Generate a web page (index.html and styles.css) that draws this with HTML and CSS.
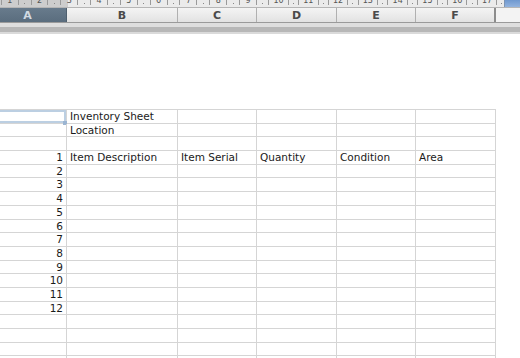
FILE: index.html
```html
<!DOCTYPE html>
<html>
<head>
    <title>Inventory Sheet</title>
    <link rel="stylesheet" href="styles.css">
</head>
<body>
    <div class="ruler">
        <div class="ruler-track" id="ruler"></div>
        <div class="ruler-corner"></div>
    </div>

    <div class="col-heads">
        <div class="col-head selected">A</div>
        <div class="col-head">B</div>
        <div class="col-head">C</div>
        <div class="col-head">D</div>
        <div class="col-head">E</div>
        <div class="col-head last">F</div>
        <div class="col-rest"></div>
    </div>

    <div class="split">
        <div class="split-light"></div>
        <div class="split-dark"></div>
        <div class="split-fade"></div>
    </div>

    <div class="blank-area"></div>

    <div class="sheet" id="sheet"></div>

    <script>
        document.addEventListener("DOMContentLoaded", function () {
            const ruler = document.getElementById("ruler");
            for (let n = 1; n <= 17; n++) {
                const seg = document.createElement("div");
                seg.className = "ruler-seg";
                seg.innerHTML = '<i class="tick"></i><span>' + n + '</span><i class="tick"></i><i class="dot"></i>';
                ruler.appendChild(seg);
            }

            const rows = [
                ["", "Inventory Sheet"],
                ["", "Location"],
                ["", ""],
                ["1", "Item Description", "Item Serial", "Quantity", "Condition", "Area"],
                ["2"], ["3"], ["4"], ["5"], ["6"], ["7"], ["8"], ["9"], ["10"], ["11"], ["12"],
                [""], [""], [""], [""]
            ];

            const sheet = document.getElementById("sheet");
            rows.forEach((row, index) => {
                const div = document.createElement("div");
                div.className = "row";
                for (let c = 0; c < 6; c++) {
                    const cell = document.createElement("div");
                    cell.className = c === 0 ? "cell num" : "cell";
                    if (c === 0 && index === 0) {
                        cell.className += " active";
                    }
                    cell.textContent = row[c] || "";
                    div.appendChild(cell);
                }
                sheet.appendChild(div);
            });
        });
    </script>
</body>
</html>
```

FILE: styles.css
```css
body {
    font-family: "DejaVu Sans", Verdana, sans-serif;
    background-color: #fff;
    margin: 0;
    padding: 0;
    width: 520px;
    height: 358px;
    overflow: hidden;
}

.ruler {
    display: flex;
    height: 7px;
    overflow: hidden;
    background: linear-gradient(to right, #cdcdcd 68px, #ebebeb 68px);
}

.ruler-track {
    display: flex;
    flex: 1;
    min-width: 0;
    overflow: hidden;
    margin-left: -2px;
}

.ruler-seg {
    flex: 0 0 29.8px;
    display: flex;
    justify-content: space-around;
    align-items: flex-start;
    color: #555;
    font-size: 8px;
}

.ruler-seg span {
    margin-top: -4px;
    line-height: 10px;
}

.tick {
    width: 1px;
    height: 5px;
    background-color: #9a9a9a;
}

.dot {
    width: 1px;
    height: 1px;
    margin-top: 3px;
    background-color: #888;
}

.ruler-corner {
    flex: 0 0 15px;
    height: 9px;
    background: linear-gradient(#6f98cf, #9dbbe3);
    border-left: 1px solid #7d94b3;
}

.col-heads {
    display: grid;
    grid-template-columns: 78px 111px 79px 80px 79px 80px 1fr;
    margin-left: -11px;
    height: 14px;
    border-top: 1px solid #b5b5b5;
    border-bottom: 1px solid #9a9a9a;
}

.col-head {
    display: flex;
    justify-content: center;
    align-items: center;
    font-size: 11px;
    font-weight: bold;
    color: #4a4a4a;
    background: linear-gradient(#f4f4f4, #e2e2e2);
    border-right: 1px solid #b0b0b0;
}

.col-head.selected {
    background: linear-gradient(#687b8c, #5a6d7e);
    color: #d2dae2;
    border-right-color: #4e5f6e;
}

.col-head.last {
    border-right: 2px solid #8c8c8c;
}

.col-rest {
    background-color: #f3f3f3;
}

.split-light {
    height: 4px;
    background-color: #dedede;
}

.split-dark {
    height: 5px;
    background-color: #b7b7b7;
}

.split-fade {
    height: 2px;
    background-color: #dadada;
}

.blank-area {
    height: 75px;
}

.sheet {
    margin-left: -11px;
}

.row {
    display: grid;
    grid-template-columns: 78px 111px 79px 80px 79px 80px;
    width: 507px;
    height: 13.7px;
    box-sizing: border-box;
    border-top: 1px solid #d5d5d5;
}

.cell {
    position: relative;
    border-right: 1px solid #d5d5d5;
    font-size: 10.5px;
    line-height: 12.7px;
    color: #1a1a1a;
    padding-left: 3px;
    white-space: nowrap;
}

.cell.num {
    text-align: right;
    padding-right: 3px;
    padding-left: 0;
}

.cell.active {
    box-shadow: inset 0 0 0 2px #bccfe2;
}

.cell.active::after {
    content: "";
    position: absolute;
    right: -1px;
    bottom: -2px;
    width: 4px;
    height: 4px;
    background-color: #9bb5d2;
}
```
